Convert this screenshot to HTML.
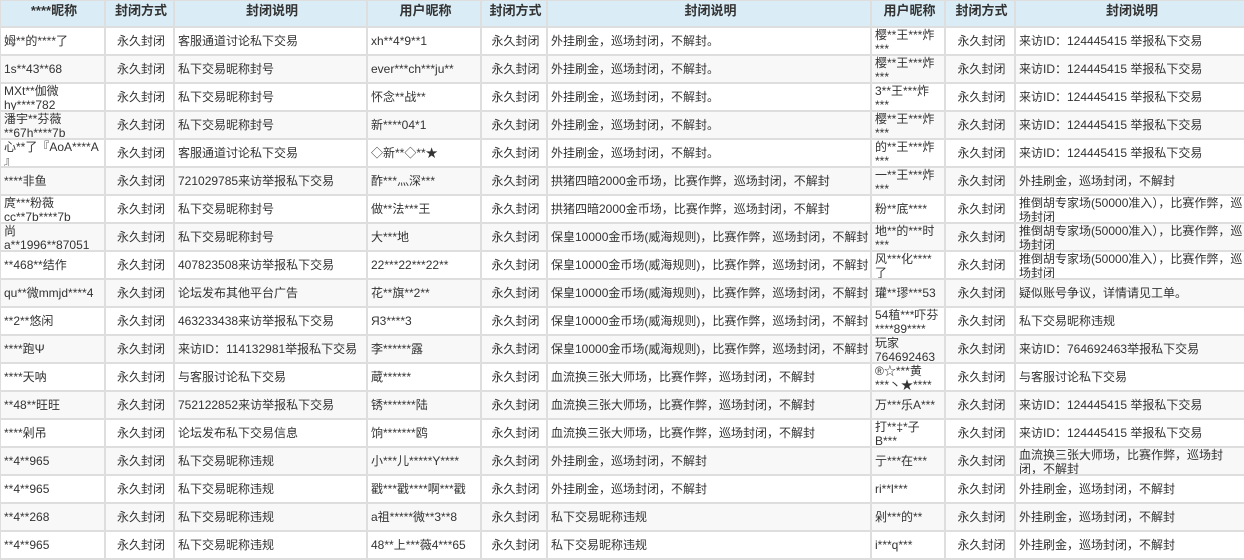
<!DOCTYPE html><html><head><meta charset="utf-8"><style>
body{margin:0;background:#fff;width:1244px;height:559px;overflow:hidden;font-family:"Liberation Sans","Noto Sans CJK SC",sans-serif;font-size:12px;color:#333}
table{border-collapse:collapse;table-layout:fixed;width:1246px;margin:-1px 0 0 -1px}
td,th{border:2px solid #dedede;padding:0 0 0 3px;height:26px;overflow:hidden;vertical-align:middle}
th{background:#daedf6;font-weight:bold;font-size:13px;text-align:center;color:#333;height:25px;vertical-align:top;line-height:20px}
td div{height:26px;line-height:26px;overflow:hidden;white-space:nowrap}
td div.w{white-space:normal;line-height:14px;word-break:normal;overflow-wrap:anywhere}
td.c{text-align:center}
tr:nth-child(odd) td{background:#f8f8f8}
</style></head><body><table>
<colgroup><col style="width:105px"><col style="width:69px"><col style="width:193px"><col style="width:114px"><col style="width:66px"><col style="width:324px"><col style="width:74px"><col style="width:70px"><col style="width:231px"></colgroup>
<tr><th>****昵称</th><th>封闭方式</th><th>封闭说明</th><th>用户昵称</th><th>封闭方式</th><th>封闭说明</th><th>用户昵称</th><th>封闭方式</th><th>封闭说明</th></tr>
<tr><td><div>姆**的****了</div></td><td class=c><div>永久封闭</div></td><td><div>客服通道讨论私下交易</div></td><td><div>xh**4*9**1</div></td><td class=c><div>永久封闭</div></td><td><div>外挂刷金，巡场封闭，不解封。</div></td><td><div class=w>樱**王***炸<br>***</div></td><td class=c><div>永久封闭</div></td><td><div>来访ID：124445415 举报私下交易</div></td></tr>
<tr><td><div>1s**43**68</div></td><td class=c><div>永久封闭</div></td><td><div>私下交易昵称封号</div></td><td><div>ever***ch***ju**</div></td><td class=c><div>永久封闭</div></td><td><div>外挂刷金，巡场封闭，不解封。</div></td><td><div class=w>樱**王***炸<br>***</div></td><td class=c><div>永久封闭</div></td><td><div>来访ID：124445415 举报私下交易</div></td></tr>
<tr><td><div class=w>MXt**伽微<br>hy****782</div></td><td class=c><div>永久封闭</div></td><td><div>私下交易昵称封号</div></td><td><div>怀念**战**</div></td><td class=c><div>永久封闭</div></td><td><div>外挂刷金，巡场封闭，不解封。</div></td><td><div class=w>3**王***炸<br>***</div></td><td class=c><div>永久封闭</div></td><td><div>来访ID：124445415 举报私下交易</div></td></tr>
<tr><td><div class=w>潘宇**芬薇<br>**67h****7b</div></td><td class=c><div>永久封闭</div></td><td><div>私下交易昵称封号</div></td><td><div>新****04*1</div></td><td class=c><div>永久封闭</div></td><td><div>外挂刷金，巡场封闭，不解封。</div></td><td><div class=w>樱**王***炸<br>***</div></td><td class=c><div>永久封闭</div></td><td><div>来访ID：124445415 举报私下交易</div></td></tr>
<tr><td><div class=w>心**了『AoA****A<br>』</div></td><td class=c><div>永久封闭</div></td><td><div>客服通道讨论私下交易</div></td><td><div>◇新**◇**★</div></td><td class=c><div>永久封闭</div></td><td><div>外挂刷金，巡场封闭，不解封。</div></td><td><div class=w>的**王***炸<br>***</div></td><td class=c><div>永久封闭</div></td><td><div>来访ID：124445415 举报私下交易</div></td></tr>
<tr><td><div>****非鱼</div></td><td class=c><div>永久封闭</div></td><td><div>721029785来访举报私下交易</div></td><td><div>酢***灬深***</div></td><td class=c><div>永久封闭</div></td><td><div>拱猪四暗2000金币场，比赛作弊，巡场封闭，不解封</div></td><td><div class=w>一**王***炸<br>***</div></td><td class=c><div>永久封闭</div></td><td><div>外挂刷金，巡场封闭，不解封</div></td></tr>
<tr><td><div class=w>庹***粉薇<br>cc**7b****7b</div></td><td class=c><div>永久封闭</div></td><td><div>私下交易昵称封号</div></td><td><div>做**法***王</div></td><td class=c><div>永久封闭</div></td><td><div>拱猪四暗2000金币场，比赛作弊，巡场封闭，不解封</div></td><td><div>粉**底****</div></td><td class=c><div>永久封闭</div></td><td><div class=w>推倒胡专家场(50000准入），比赛作弊，巡场封闭</div></td></tr>
<tr><td><div class=w>尚<br>a**1996**87051</div></td><td class=c><div>永久封闭</div></td><td><div>私下交易昵称封号</div></td><td><div>大***地</div></td><td class=c><div>永久封闭</div></td><td><div>保皇10000金币场(威海规则)，比赛作弊，巡场封闭，不解封</div></td><td><div class=w>地**的***时<br>***</div></td><td class=c><div>永久封闭</div></td><td><div class=w>推倒胡专家场(50000准入），比赛作弊，巡场封闭</div></td></tr>
<tr><td><div>**468**结作</div></td><td class=c><div>永久封闭</div></td><td><div>407823508来访举报私下交易</div></td><td><div>22***22***22**</div></td><td class=c><div>永久封闭</div></td><td><div>保皇10000金币场(威海规则)，比赛作弊，巡场封闭，不解封</div></td><td><div class=w>风***化****<br>了</div></td><td class=c><div>永久封闭</div></td><td><div class=w>推倒胡专家场(50000准入），比赛作弊，巡场封闭</div></td></tr>
<tr><td><div>qu**微mmjd****4</div></td><td class=c><div>永久封闭</div></td><td><div>论坛发布其他平台广告</div></td><td><div>花**旗**2**</div></td><td class=c><div>永久封闭</div></td><td><div>保皇10000金币场(威海规则)，比赛作弊，巡场封闭，不解封</div></td><td><div>瓘**璆***53</div></td><td class=c><div>永久封闭</div></td><td><div>疑似账号争议，详情请见工单。</div></td></tr>
<tr><td><div>**2**悠闲</div></td><td class=c><div>永久封闭</div></td><td><div>463233438来访举报私下交易</div></td><td><div>Я3****3</div></td><td class=c><div>永久封闭</div></td><td><div>保皇10000金币场(威海规则)，比赛作弊，巡场封闭，不解封</div></td><td><div class=w>54稙***吓芬<br>****89****</div></td><td class=c><div>永久封闭</div></td><td><div>私下交易昵称违规</div></td></tr>
<tr><td><div>****跑Ψ</div></td><td class=c><div>永久封闭</div></td><td><div>来访ID：114132981举报私下交易</div></td><td><div>李******露</div></td><td class=c><div>永久封闭</div></td><td><div>保皇10000金币场(威海规则)，比赛作弊，巡场封闭，不解封</div></td><td><div class=w>玩家<br>764692463</div></td><td class=c><div>永久封闭</div></td><td><div>来访ID：764692463举报私下交易</div></td></tr>
<tr><td><div>****天呐</div></td><td class=c><div>永久封闭</div></td><td><div>与客服讨论私下交易</div></td><td><div>蔵******</div></td><td class=c><div>永久封闭</div></td><td><div>血流换三张大师场，比赛作弊，巡场封闭，不解封</div></td><td><div class=w>®☆***黄<br>***丶★****</div></td><td class=c><div>永久封闭</div></td><td><div>与客服讨论私下交易</div></td></tr>
<tr><td><div>**48**旺旺</div></td><td class=c><div>永久封闭</div></td><td><div>752122852来访举报私下交易</div></td><td><div>锈*******陆</div></td><td class=c><div>永久封闭</div></td><td><div>血流换三张大师场，比赛作弊，巡场封闭，不解封</div></td><td><div>万***乐A***</div></td><td class=c><div>永久封闭</div></td><td><div>来访ID：124445415 举报私下交易</div></td></tr>
<tr><td><div>****剁吊</div></td><td class=c><div>永久封闭</div></td><td><div>论坛发布私下交易信息</div></td><td><div>饷*******鸥</div></td><td class=c><div>永久封闭</div></td><td><div>血流换三张大师场，比赛作弊，巡场封闭，不解封</div></td><td><div class=w>打**‡*子<br>B***</div></td><td class=c><div>永久封闭</div></td><td><div>来访ID：124445415 举报私下交易</div></td></tr>
<tr><td><div>**4**965</div></td><td class=c><div>永久封闭</div></td><td><div>私下交易昵称违规</div></td><td><div>小***儿*****Y****</div></td><td class=c><div>永久封闭</div></td><td><div>外挂刷金，巡场封闭，不解封</div></td><td><div>亍***在***</div></td><td class=c><div>永久封闭</div></td><td><div class=w>血流换三张大师场，比赛作弊，巡场封闭，不解封</div></td></tr>
<tr><td><div>**4**965</div></td><td class=c><div>永久封闭</div></td><td><div>私下交易昵称违规</div></td><td><div>戳***戳****啊***戳</div></td><td class=c><div>永久封闭</div></td><td><div>外挂刷金，巡场封闭，不解封</div></td><td><div>ri**l***</div></td><td class=c><div>永久封闭</div></td><td><div>外挂刷金，巡场封闭，不解封</div></td></tr>
<tr><td><div>**4**268</div></td><td class=c><div>永久封闭</div></td><td><div>私下交易昵称违规</div></td><td><div>a祖*****微**3**8</div></td><td class=c><div>永久封闭</div></td><td><div>私下交易昵称违规</div></td><td><div>剁***的**</div></td><td class=c><div>永久封闭</div></td><td><div>外挂刷金，巡场封闭，不解封</div></td></tr>
<tr><td><div>**4**965</div></td><td class=c><div>永久封闭</div></td><td><div>私下交易昵称违规</div></td><td><div>48**上***薇4***65</div></td><td class=c><div>永久封闭</div></td><td><div>私下交易昵称违规</div></td><td><div>i***q***</div></td><td class=c><div>永久封闭</div></td><td><div>外挂刷金，巡场封闭，不解封</div></td></tr>
</table></body></html>
